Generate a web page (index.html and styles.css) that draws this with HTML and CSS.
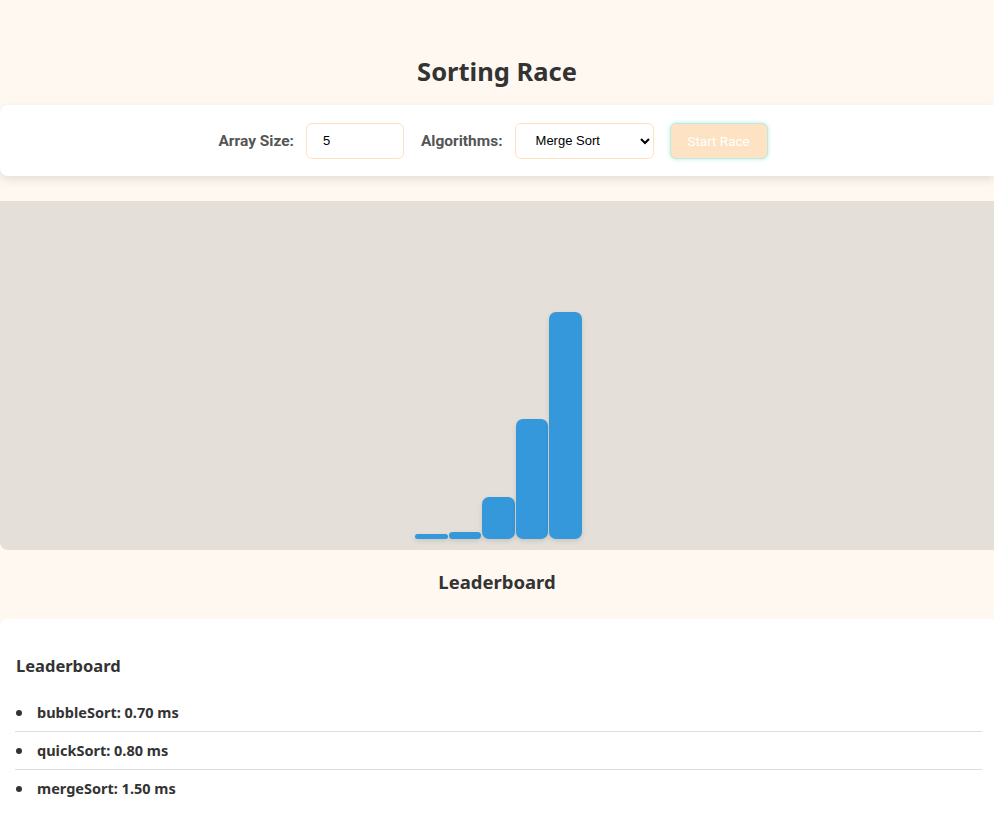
FILE: index.html
```html
<!DOCTYPE html>
<html lang="en">
<head>
<meta charset="utf-8">
<title>Sorting Race</title>
<link rel="stylesheet" href="styles.css">
</head>
<body>
  <header class="header">
    <h1 class="title">Sorting Race</h1>
  </header>
  <section class="controls">
    <label class="ctl-label" for="size">Array Size:</label>
    <input class="ctl-input" id="size" type="number" value="5">
    <label class="ctl-label ctl-label-alg" for="alg">Algorithms:</label>
    <select class="ctl-select" id="alg">
      <option>Merge Sort</option>
      <option>Bubble Sort</option>
      <option>Quick Sort</option>
    </select>
    <button class="ctl-button" type="button">Start Race</button>
  </section>
  <section class="chart">
    <div class="bar" style="height:5px"></div>
    <div class="bar" style="height:7px"></div>
    <div class="bar" style="height:42px"></div>
    <div class="bar" style="height:120px"></div>
    <div class="bar" style="height:227px"></div>
  </section>
  <h2 class="lb-heading">Leaderboard</h2>
  <section class="lb-panel">
    <h3 class="lb-title">Leaderboard</h3>
    <ul class="lb-list">
      <li class="lb-item">bubbleSort: 0.70 ms</li>
      <li class="lb-item">quickSort: 0.80 ms</li>
      <li class="lb-item">mergeSort: 1.50 ms</li>
    </ul>
  </section>
</body>
</html>
```
FILE: styles.css
```css
* { box-sizing: border-box; }
html, body { margin: 0; padding: 0; }
body {
  background: #fff8f1;
  color: #333;
  font-family: "Noto Sans", "Open Sans", sans-serif;
  overflow: hidden;
  height: 819px;
}
.header {
  padding-top: 54px;
  height: 105px;
}
.title {
  margin: 0;
  text-align: center;
  font-size: 25.5px;
  line-height: 34px;
  font-weight: 700;
  color: #333;
}
.controls {
  background: #fff;
  height: 71px;
  border-radius: 8px 0 0 8px;
  box-shadow: 0 4px 10px rgba(0, 0, 0, 0.1);
  display: flex;
  align-items: center;
  justify-content: center;
  padding-right: 8px;
}
.ctl-label {
  font-family: Roboto, "Liberation Sans", sans-serif;
  font-weight: 700;
  font-size: 15.5px;
  color: #555;
  margin-right: 12px;
}
.ctl-label-alg { margin-left: 17px; }
.ctl-input, .ctl-select {
  height: 36px;
  border: 1px solid #ffe2bd;
  border-radius: 6px;
  background: #fff;
  font-family: "Liberation Sans", Arial, sans-serif;
  font-size: 13px;
  color: #000;
}
.ctl-input {
  width: 98px;
  padding: 0 16px;
  -moz-appearance: textfield;
}
.ctl-input::-webkit-inner-spin-button,
.ctl-input::-webkit-outer-spin-button { -webkit-appearance: none; margin: 0; }
.ctl-select {
  width: 139px;
  padding: 0 0 0 16px;
}
.ctl-button {
  margin-left: 16px;
  width: 98px;
  height: 36px;
  background: #fde3c4;
  color: #fff;
  border: 1px solid #bfe9df;
  border-radius: 6px;
  box-shadow: 0 0 4px rgba(100, 210, 190, 0.45);
  font-family: Roboto, "Liberation Sans", sans-serif;
  font-size: 13.5px;
}
.chart {
  margin-top: 25px;
  height: 349px;
  background: #e4dfd9;
  border-radius: 0 0 0 8px;
  display: flex;
  align-items: flex-end;
  justify-content: center;
  gap: 1px;
  padding-bottom: 11px;
  padding-left: 3px;
}
.bar {
  width: 32.6px;
  background: #3498db;
  border-radius: 7px;
  box-shadow: 0 2px 5px rgba(0, 0, 0, 0.12);
}
.lb-heading {
  margin: 0;
  height: 69px;
  line-height: 64px;
  text-align: center;
  font-size: 18.5px;
  font-weight: 700;
}
.lb-panel {
  background: #fff;
  border-radius: 8px 0 0 0;
  padding: 36px 12px 0 15px;
  min-height: 200px;
}
.lb-title {
  margin: 0 0 18px 1px;
  font-size: 16.5px;
  line-height: 21px;
  font-weight: 700;
}
.lb-list {
  list-style: none;
  margin: 0;
  padding: 0;
}
.lb-item {
  font-size: 14.5px;
  font-weight: 700;
  line-height: 19px;
  padding: 9px 0 9px 0;
  border-bottom: 1px solid #ddd;
  display: flex;
  align-items: center;
}
.lb-item:last-child { border-bottom: none; }
.lb-item::before {
  content: "";
  width: 6px;
  height: 6px;
  border-radius: 50%;
  background: #333;
  margin-left: 1px;
  margin-right: 15px;
}
```
